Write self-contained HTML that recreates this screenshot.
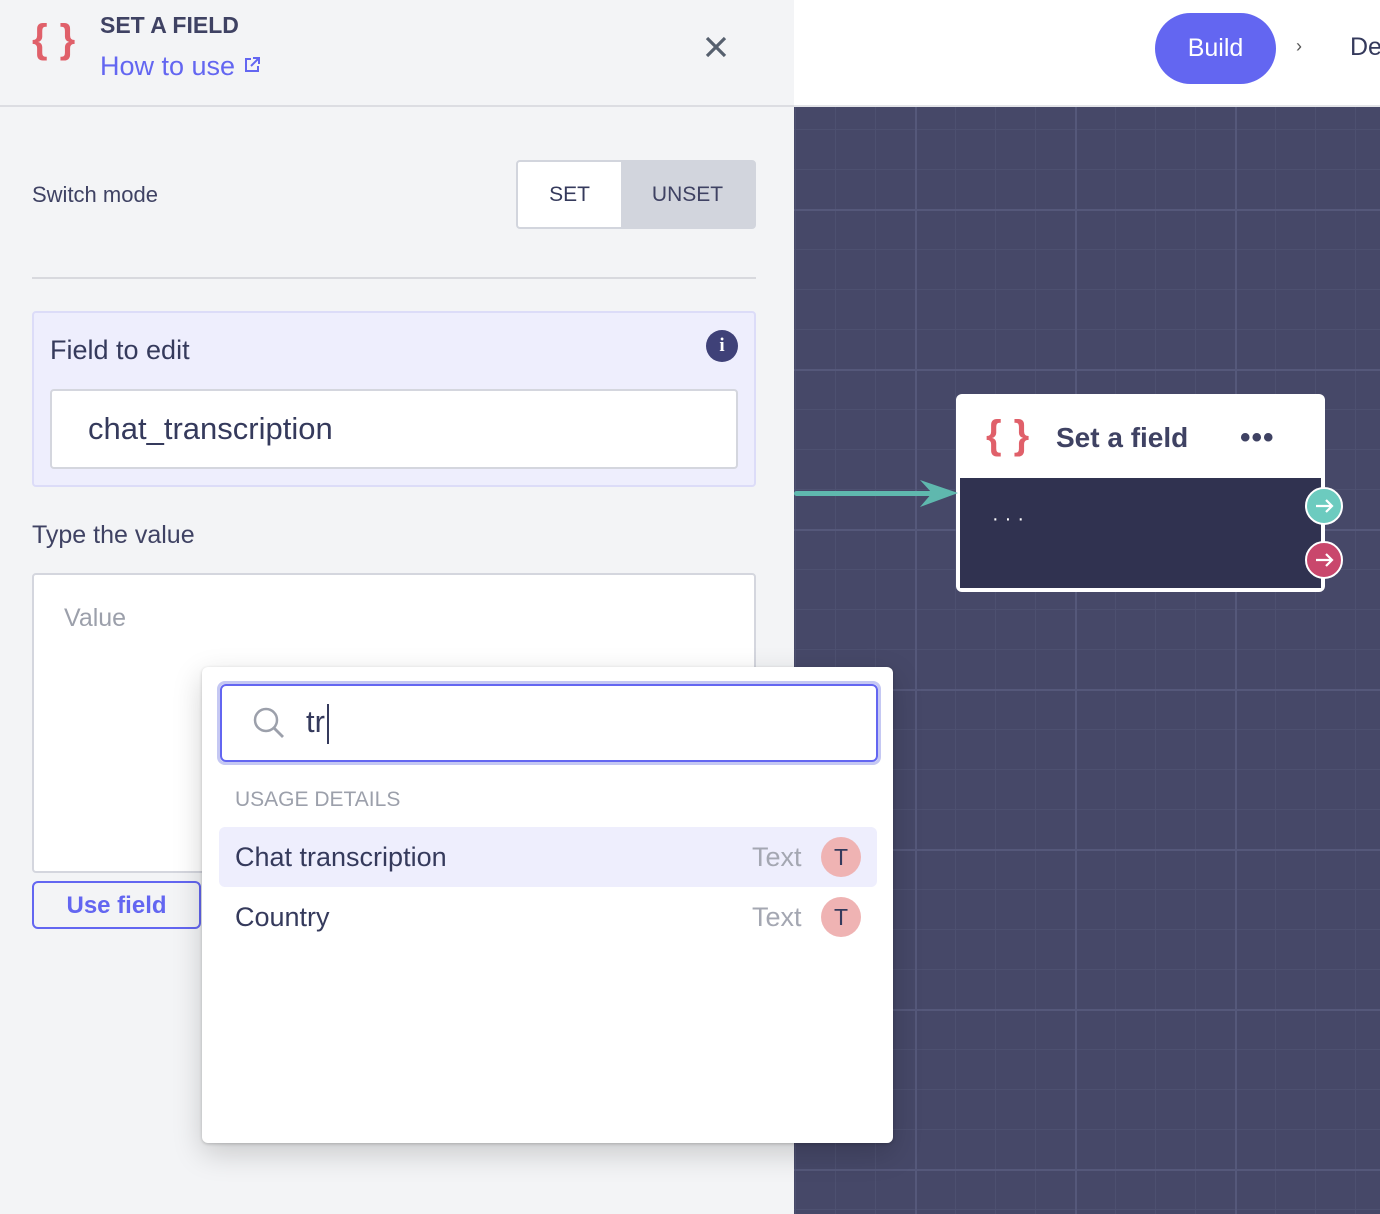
<!DOCTYPE html>
<html><head><meta charset="utf-8"><style>
*{box-sizing:border-box;margin:0;padding:0}
body{width:1380px;height:1214px;overflow:hidden;position:relative;font-family:"Liberation Sans",sans-serif;background:#f3f4f6;color:#353a5c}
.abs{position:absolute}
#canvas{left:794px;top:107px;width:586px;height:1107px;background-color:#464868;
background-image:linear-gradient(#55587a 0 2px,transparent 2px),linear-gradient(90deg,#55587a 0 2px,transparent 2px),linear-gradient(#4d5070 0 1px,transparent 1px),linear-gradient(90deg,#4d5070 0 1px,transparent 1px);
background-size:160px 160px,160px 160px,40px 40px,40px 40px;background-position:121px 262px,121px 262px,1px 22px,1px 22px}
#topbar{left:794px;top:0;width:586px;height:107px;background:#fff;border-bottom:2px solid #e3e4e8}
#side{left:0;top:0;width:794px;height:1214px;background:#f3f4f6}
</style></head><body>
<div id="canvas" class="abs"></div>
<div id="topbar" class="abs">
  <div class="abs" style="left:361px;top:13px;width:121px;height:71px;border-radius:36px;background:#6366f1;color:#fff;font-size:25px;line-height:71px;text-align:center">Build</div>
  <div class="abs" style="left:502px;top:36px;font-size:18px;color:#555">›</div>
  <div class="abs" style="left:556px;top:33px;font-size:25px;color:#353a5c">De</div>
</div>
<div id="side" class="abs">
  <div class="abs" style="left:0;top:0;width:794px;height:107px;border-bottom:2px solid #dcdde2"></div>
  <div class="abs" style="left:32px;top:17px;font-size:40px;color:#e0606a;font-weight:bold;letter-spacing:12px">{}</div>
  <div class="abs" style="left:100px;top:12px;font-size:23px;font-weight:bold;color:#3f4263">SET A FIELD</div>
  <div class="abs" style="left:100px;top:51px;font-size:27px;color:#6366f1">How to use <svg width="18" height="18" viewBox="0 0 18 18" style="vertical-align:1px"><path d="M8 3H3v12h12v-5M10 2h6v6M16 2 8 10" fill="none" stroke="#6366f1" stroke-width="2"/></svg></div>
  <svg class="abs" style="left:704px;top:35px" width="24" height="24" viewBox="0 0 24 24"><path d="M3 3 21 21M21 3 3 21" stroke="#56606e" stroke-width="3.2"/></svg>
  <div class="abs" style="left:32px;top:182px;font-size:22px;color:#3f4263">Switch mode</div>
  <div class="abs" style="left:516px;top:160px;width:240px;height:69px;border:2px solid #d2d5dd;border-radius:4px;background:#d2d5dd;overflow:hidden">
    <div class="abs" style="left:0;top:0;width:103px;height:65px;background:#fff;font-size:21px;line-height:65px;text-align:center;color:#353a5c">SET</div>
    <div class="abs" style="left:103px;top:0;width:133px;height:65px;font-size:21px;line-height:65px;text-align:center;color:#3f4263">UNSET</div>
  </div>
  <div class="abs" style="left:32px;top:277px;width:724px;height:2px;background:#d8d9de"></div>
  <div class="abs" style="left:32px;top:311px;width:724px;height:176px;background:#eeeefd;border:2px solid #dcdcf8;border-radius:4px">
    <div class="abs" style="left:16px;top:22px;font-size:27px;color:#353a5c">Field to edit</div>
    <div class="abs" style="left:672px;top:17px;width:32px;height:32px;border-radius:50%;background:#3f4178;color:#fff;font-weight:bold;font-size:19px;text-align:center;line-height:32px;font-family:'Liberation Serif',serif">i</div>
    <div class="abs" style="left:16px;top:76px;width:688px;height:80px;background:#fff;border:2px solid #d4d6de;border-radius:4px;font-size:31px;line-height:76px;padding-left:36px;color:#353a5c">chat_transcription</div>
  </div>
  <div class="abs" style="left:32px;top:521px;font-size:25px;color:#3f4263">Type the value</div>
  <div class="abs" style="left:32px;top:573px;width:724px;height:300px;background:#fff;border:2px solid #d4d6de;border-radius:4px">
    <div class="abs" style="left:30px;top:29px;font-size:25px;color:#9ca0ab">Value</div>
  </div>
  <div class="abs" style="left:32px;top:881px;width:169px;height:48px;border:2px solid #6366f1;border-radius:6px;font-size:24px;font-weight:bold;color:#6366f1;line-height:45px;text-align:center">Use field</div>
</div>
<!-- node -->
<div class="abs" style="left:956px;top:394px;width:369px;height:198px;background:#fff;border-radius:6px">
  <div class="abs" style="left:30px;top:19px;font-size:40px;color:#e0606a;font-weight:bold;letter-spacing:12px">{}</div>
  <div class="abs" style="left:100px;top:28px;font-size:28px;font-weight:bold;color:#3f4263">Set a field</div>
  <div class="abs" style="left:284px;top:27px;font-size:30px;font-weight:bold;color:#3f4263;letter-spacing:1px">•••</div>
  <div class="abs" style="left:4px;top:84px;width:361px;height:110px;background:#303250">
    <div class="abs" style="left:32px;top:30px;color:#fff;font-size:20px;letter-spacing:6px">···</div>
  </div>
</div>
<div class="abs" style="left:794px;top:491px;width:140px;height:5px;background:#5fb8ae;border-radius:3px"></div>
<svg class="abs" style="left:920px;top:480px" width="40" height="28"><path d="M0 0 38 13 0 27 12 13Z" fill="#5fb8ae"/></svg>
<div class="abs" style="left:1305px;top:487px;width:38px;height:38px;border-radius:50%;background:#6ccbbf;border:2px solid #fff"><svg width="34" height="34" viewBox="0 0 34 34"><path d="M9 17h16M19 11l6 6-6 6" fill="none" stroke="#fff" stroke-width="2.2"/></svg></div>
<div class="abs" style="left:1305px;top:541px;width:38px;height:38px;border-radius:50%;background:#c9476c;border:2px solid #fff"><svg width="34" height="34" viewBox="0 0 34 34"><path d="M9 17h16M19 11l6 6-6 6" fill="none" stroke="#fff" stroke-width="2.2"/></svg></div>
<!-- dropdown -->
<div class="abs" style="left:202px;top:667px;width:691px;height:476px;background:#fff;border-radius:6px;box-shadow:0 10px 30px rgba(0,0,0,.18),0 1px 3px rgba(0,0,0,.2)">
  <div class="abs" style="left:15px;top:14px;width:664px;height:84px;border:3px solid #c5c8f3;border-radius:8px">
    <div class="abs" style="left:0;top:0;width:658px;height:78px;border:2px solid #6366f1;border-radius:6px">
      <svg class="abs" style="left:30px;top:20px" width="36" height="36" viewBox="0 0 36 36"><circle cx="14" cy="14" r="11" fill="none" stroke="#9ca0ab" stroke-width="2.5"/><path d="M22 22 31 31" stroke="#9ca0ab" stroke-width="2.8"/></svg>
      <div class="abs" style="left:84px;top:18px;font-size:31px;color:#353a5c">tr</div>
      <div class="abs" style="left:105px;top:18px;width:2px;height:40px;background:#353a5c"></div>
    </div>
  </div>
  <div class="abs" style="left:33px;top:121px;font-size:21px;color:#9ca0ab">USAGE DETAILS</div>
  <div class="abs" style="left:17px;top:160px;width:658px;height:60px;background:#eeeefd;border-radius:6px"></div>
  <div class="abs" style="left:33px;top:175px;font-size:27px;color:#353a5c">Chat transcription</div>
  <div class="abs" style="left:550px;top:175px;font-size:27px;color:#a4a7b2">Text</div>
  <div class="abs" style="left:619px;top:170px;width:40px;height:40px;border-radius:50%;background:#efb3b3;font-size:23px;line-height:40px;text-align:center;color:#353a5c">T</div>
  <div class="abs" style="left:33px;top:235px;font-size:27px;color:#353a5c">Country</div>
  <div class="abs" style="left:550px;top:235px;font-size:27px;color:#a4a7b2">Text</div>
  <div class="abs" style="left:619px;top:230px;width:40px;height:40px;border-radius:50%;background:#efb3b3;font-size:23px;line-height:40px;text-align:center;color:#353a5c">T</div>
</div>
</body></html>
